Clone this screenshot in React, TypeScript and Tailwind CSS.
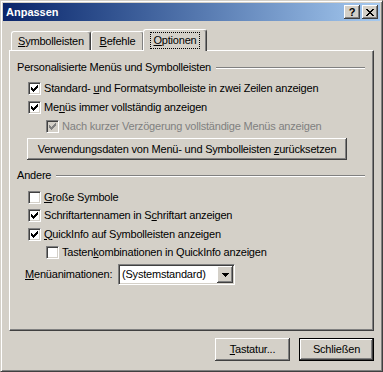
import React from "react";

const FONT = { fontFamily: '"Liberation Sans", Arial, sans-serif' };

const CHECK: [number, number][] = [
  [6, 0], [5, 1], [6, 1], [0, 2], [4, 2], [5, 2], [6, 2],
  [0, 3], [1, 3], [3, 3], [4, 3], [5, 3],
  [0, 4], [1, 4], [2, 4], [3, 4], [4, 4],
  [1, 5], [2, 5], [3, 5], [2, 6],
];

function Box({ checked, disabled }: { checked: boolean; disabled?: boolean }) {
  return (
    <div
      className={`w-[13px] h-[13px] shrink-0 border border-t-[#808080] border-l-[#808080] border-r-white border-b-white shadow-[inset_1px_1px_0_#404040,inset_-1px_-1px_0_#d4d0c8] flex items-center justify-center ${disabled ? "bg-[#d4d0c8]" : "bg-white"}`}
    >
      {checked && (
        <svg width="7" height="7" viewBox="0 0 7 7" shapeRendering="crispEdges">
          {CHECK.map(([x, y]) => (
            <rect key={`${x}-${y}`} x={x} y={y} width="1" height="1" fill={disabled ? "#808080" : "#000"} />
          ))}
        </svg>
      )}
    </div>
  );
}

function Row({
  checked,
  disabled,
  indent,
  h,
  children,
}: {
  checked: boolean;
  disabled?: boolean;
  indent: string;
  h: string;
  children: React.ReactNode;
}) {
  return (
    <div className={`flex items-center ${indent} ${h}`}>
      <Box checked={checked} disabled={disabled} />
      <span className={`ml-[3px] ${disabled ? "text-[#808080]" : "text-black"}`}>{children}</span>
    </div>
  );
}

function Header({ children }: { children: React.ReactNode }) {
  return (
    <div className="flex items-center h-[15px]">
      <span>{children}</span>
      <div className="flex-1 ml-[5px] h-[2px] border-t border-t-[#808080] border-b border-b-white" />
    </div>
  );
}

const raised =
  "bg-[#d4d0c8] shadow-[inset_-1px_-1px_0_#404040,inset_1px_1px_0_#ffffff,inset_-2px_-2px_0_#808080,inset_2px_2px_0_#d4d0c8]";

export default function App() {
  return (
    <div
      style={FONT}
      className="w-[383px] h-[372px] bg-[#d4d0c8] border border-t-[#d4d0c8] border-l-[#d4d0c8] border-r-[#404040] border-b-[#404040] shadow-[inset_1px_1px_0_#ffffff,inset_-1px_-1px_0_#808080] p-[2px] flex flex-col text-[11px] text-black leading-none select-none"
    >
      {/* Title bar */}
      <div className="h-[18px] flex items-center bg-gradient-to-r from-[#0a246a] to-[#a6caf0] pl-[3px] pr-[2px]">
        <span className="text-white font-bold text-[11px] flex-1">Anpassen</span>
        <div className={`w-[16px] h-[14px] ${raised} flex items-center justify-center`}>
          <span className="font-bold text-[11px] text-black leading-none mt-[1px]">?</span>
        </div>
        <div className={`w-[16px] h-[14px] ml-[2px] ${raised} flex items-center justify-center`}>
          <svg width="8" height="7" viewBox="0 0 8 7" shapeRendering="crispEdges">
            <path d="M0 0h2v1h-2zM6 0h2v1h-2zM1 1h2v1h-2zM5 1h2v1h-2zM2 2h4v1h-4zM3 3h2v1h-2zM2 4h4v1h-4zM1 5h2v1h-2zM5 5h2v1h-2zM0 6h2v1h-2zM6 6h2v1h-2z" fill="#000" />
          </svg>
        </div>
      </div>

      {/* Body */}
      <div className="flex flex-col px-[6px] pt-[8px] tracking-[-0.2px]">
        {/* Tabs */}
        <div className="flex items-end h-[21px] pl-[2px] relative z-10">
          <div className="w-[80px] h-[19px] border-t border-l border-t-white border-l-white border-r border-r-[#404040] shadow-[inset_-1px_0_0_#808080] rounded-tl-[3px] rounded-tr-[3px] flex items-center justify-center">
            <span>
              <u>S</u>ymbolleisten
            </span>
          </div>
          <div className="w-[53px] h-[19px] border-t border-l border-t-white border-l-white border-r border-r-[#404040] shadow-[inset_-1px_0_0_#808080] rounded-tl-[3px] rounded-tr-[3px] flex items-center justify-center">
            <span>
              <u>B</u>efehle
            </span>
          </div>
          <div className="w-[64px] h-[22px] -mb-[1px] ml-[-1px] bg-[#d4d0c8] border-t border-l border-t-white border-l-white border-r border-r-[#404040] shadow-[inset_-1px_0_0_#808080] rounded-tl-[3px] rounded-tr-[3px] flex items-start justify-center pt-[3px]">
            <span className="outline outline-1 outline-dotted outline-black px-[2px] py-[2px]">
              <u>O</u>ptionen
            </span>
          </div>
        </div>

        {/* Panel */}
        <div className="h-[281px] border border-t-white border-l-white border-r-[#404040] border-b-[#404040] shadow-[inset_-1px_-1px_0_#808080] pl-[7px] pr-[8px] pt-[9px] flex flex-col">
          <Header>Personalisierte Menüs und Symbolleisten</Header>
          <div className="h-[4px]" />
          <Row checked indent="ml-[11px]" h="h-[19px]">
            Standard- <u>u</u>nd Formatsymbolleiste in zwei Zeilen anzeigen
          </Row>
          <Row checked indent="ml-[11px]" h="h-[19px]">
            Me<u>n</u>üs immer vollständig anzeigen
          </Row>
          <Row checked disabled indent="ml-[29px]" h="h-[19px]">
            Nach kurzer Verzögerung vollständige Menüs anzeigen
          </Row>
          <div className={`mt-[2px] ml-[10px] w-[320px] h-[22px] ${raised} flex items-center justify-center`}>
            <span>
              Verwendungsdaten von Menü- und Symbolleisten <u>z</u>urücksetzen
            </span>
          </div>
          <div className="h-[8px]" />
          <Header>Andere</Header>
          <div className="h-[5px]" />
          <Row checked={false} indent="ml-[11px]" h="h-[18px]">
            <u>G</u>roße Symbole
          </Row>
          <Row checked indent="ml-[11px]" h="h-[19px]">
            Schriftartennamen in S<u>c</u>hriftart anzeigen
          </Row>
          <Row checked indent="ml-[11px]" h="h-[18px]">
            <u>Q</u>uickInfo auf Symbolleisten anzeigen
          </Row>
          <Row checked={false} indent="ml-[29px]" h="h-[19px]">
            Tasten<u>k</u>ombinationen in QuickInfo anzeigen
          </Row>
          <div className="mt-[2px] ml-[8px] flex items-center h-[21px]">
            <span className="w-[93px]">
              <u>M</u>enüanimationen:
            </span>
            <div className="w-[117px] h-[21px] bg-white border border-t-[#808080] border-l-[#808080] border-r-white border-b-white shadow-[inset_1px_1px_0_#404040,inset_-1px_-1px_0_#d4d0c8] flex items-center p-[1px]">
              <span className="flex-1 pl-[2px]">(Systemstandard)</span>
              <div className={`w-[16px] h-[17px] ${raised} flex items-center justify-center`}>
                <svg width="7" height="4" viewBox="0 0 7 4" shapeRendering="crispEdges">
                  <path d="M0 0h7v1h-7zM1 1h5v1h-5zM2 2h3v1h-3zM3 3h1v1h-1z" fill="#000" />
                </svg>
              </div>
            </div>
          </div>
        </div>

        {/* Bottom buttons */}
        <div className="flex justify-end mt-[7px] gap-[9px]">
          <div className={`w-[75px] h-[23px] ${raised} flex items-center justify-center`}>
            <span>
              <u>T</u>astatur...
            </span>
          </div>
          <div className="w-[75px] h-[23px] border border-black">
            <div className={`w-full h-full ${raised} flex items-center justify-center`}>
              <span>Schließen</span>
            </div>
          </div>
        </div>
      </div>
    </div>
  );
}
